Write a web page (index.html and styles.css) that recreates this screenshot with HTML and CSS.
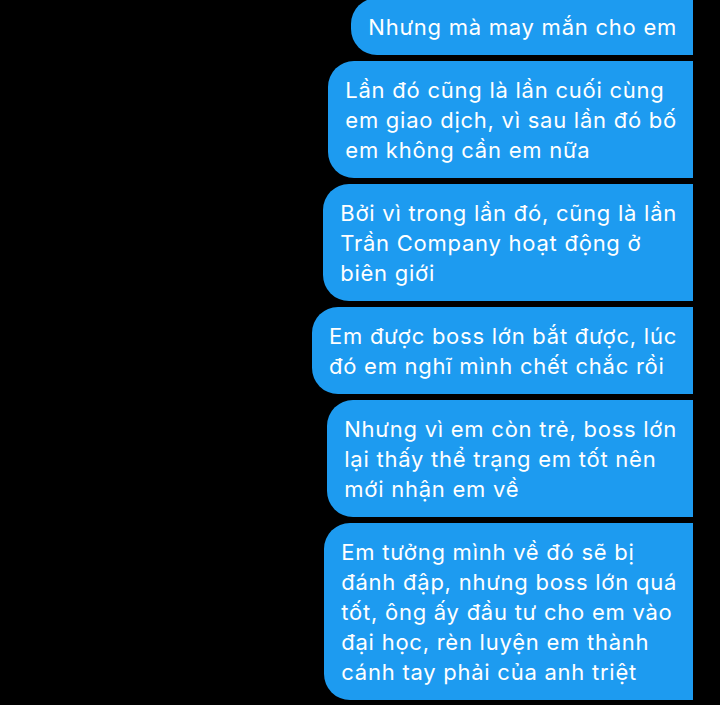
FILE: index.html
```html
<!DOCTYPE html>
<html lang="vi">
<head>
  <meta charset="UTF-8">
  <title>Tin nhắn</title>
  <link rel="stylesheet" href="styles.css">
</head>
<body>
  <div class="khung">
    <div class="tin">Nhưng mà may mắn cho em</div>
    <div class="tin">Lần đó cũng là lần cuối cùng<br>em giao dịch, vì sau lần đó bố<br>em không cần em nữa</div>
    <div class="tin">Bởi vì trong lần đó, cũng là lần<br>Trần Company hoạt động ở<br>biên giới</div>
    <div class="tin">Em được boss lớn bắt được, lúc<br>đó em nghĩ mình chết chắc rồi</div>
    <div class="tin">Nhưng vì em còn trẻ, boss lớn<br>lại thấy thể trạng em tốt nên<br>mới nhận em về</div>
    <div class="tin">Em tưởng mình về đó sẽ bị<br>đánh đập, nhưng boss lớn quá<br>tốt, ông ấy đầu tư cho em vào<br>đại học, rèn luyện em thành<br>cánh tay phải của anh triệt</div>
  </div>
</body>
</html>
```

FILE: styles.css
```css
body { margin: 0; background: #000; font-family: Inter, "Noto Sans", sans-serif; }
.khung { display: flex; flex-direction: column; align-items: flex-end; gap: 6px; padding-right: 27px; margin-top: -2px; }
.tin { background: #1d9bf0; color: #fff; font-size: 22px; line-height: 30px; letter-spacing: 0.75px; padding: 14px 16px 13px 17px; border-radius: 26px 0 0 26px; }
```
